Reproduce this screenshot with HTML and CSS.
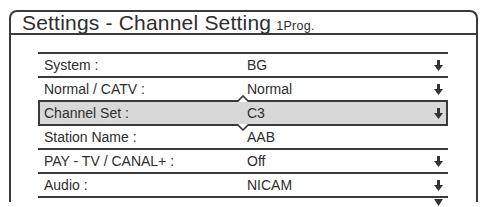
FILE: index.html
```html
<!DOCTYPE html>
<html>
<head>
<meta charset="utf-8">
<link rel="stylesheet" href="styles.css">
</head>
<body>
<div class="panel">
  <div class="titlebar">
    <span class="title">Settings - Channel Setting</span>
    <span class="sub">1Prog.</span>
  </div>
  <div class="content">
    <div class="list">
      <div class="row">
        <span class="label">System :</span><span class="value">BG</span>
        <svg class="arrow" viewBox="0 0 9 11" width="9" height="11"><rect x="3" y="0" width="3" height="6"/><polygon points="0,5 9,5 4.5,11"/></svg>
      </div>
      <div class="row">
        <span class="label">Normal / CATV :</span><span class="value">Normal</span>
        <svg class="arrow" viewBox="0 0 9 11" width="9" height="11"><rect x="3" y="0" width="3" height="6"/><polygon points="0,5 9,5 4.5,11"/></svg>
      </div>
      <div class="row selected">
        <svg class="chev chev-up" viewBox="0 0 12 7" width="12" height="7"><polygon points="0,7 6,1 12,7" class="fill"/><polyline points="0,7 6,1 12,7" class="stroke"/></svg>
        <span class="label">Channel Set :</span><span class="value">C3</span>
        <svg class="arrow" viewBox="0 0 9 11" width="9" height="11"><rect x="3" y="0" width="3" height="6"/><polygon points="0,5 9,5 4.5,11"/></svg>
        <svg class="chev chev-down" viewBox="0 0 12 7" width="12" height="7"><polygon points="0,0 6,6 12,0" class="fill"/><polyline points="0,0 6,6 12,0" class="stroke"/></svg>
      </div>
      <div class="row">
        <span class="label">Station Name :</span><span class="value">AAB</span>
      </div>
      <div class="row">
        <span class="label">PAY - TV / CANAL+ :</span><span class="value">Off</span>
        <svg class="arrow" viewBox="0 0 9 11" width="9" height="11"><rect x="3" y="0" width="3" height="6"/><polygon points="0,5 9,5 4.5,11"/></svg>
      </div>
      <div class="row">
        <span class="label">Audio :</span><span class="value">NICAM</span>
        <svg class="arrow" viewBox="0 0 9 11" width="9" height="11"><rect x="3" y="0" width="3" height="6"/><polygon points="0,5 9,5 4.5,11"/></svg>
      </div>
      <div class="more">
        <svg viewBox="0 0 9 7" width="9" height="7"><polygon points="0,0 9,0 4.5,7"/></svg>
      </div>
    </div>
  </div>
</div>
</body>
</html>
```

FILE: styles.css
```css
html, body {
  margin: 0;
  padding: 0;
  background: #ffffff;
}
body {
  width: 481px;
  height: 207px;
  overflow: hidden;
  font-family: "Liberation Sans", Arial, sans-serif;
  color: #2e2e2e;
}
.panel {
  margin: 10px 0 0 9px;
  width: 469px;
  height: 192px;
  box-sizing: border-box;
  border: 2px solid #3a3a3a;
  border-bottom: none;
  border-radius: 8px 8px 0 0;
}
.titlebar {
  height: 21px;
  border-bottom: 2px solid #3a3a3a;
  padding-left: 11px;
  display: flex;
  align-items: baseline;
  white-space: nowrap;
}
.title {
  font-size: 21px;
  line-height: 21px;
  letter-spacing: 0.2px;
}
.sub {
  font-size: 12.5px;
  margin-left: 5px;
  letter-spacing: 0.3px;
}
.content {
  padding: 17px 28px 0 27px;
}
.list {
  border-top: 2px solid #3a3a3a;
}
.row {
  position: relative;
  height: 22px;
  border-bottom: 2px solid #3a3a3a;
  display: flex;
  align-items: center;
  font-size: 14px;
  padding: 0 5px 0 6px;
}
.label {
  width: 203px;
}
.value {
  flex: 1;
}
.arrow {
  fill: #333333;
  display: block;
}
.selected {
  background: #d8d8d8;
  box-shadow: inset 2px 0 #3a3a3a, inset -2px 0 #3a3a3a;
}
.chev {
  position: absolute;
  left: 199px;
  display: block;
}
.chev-up {
  top: -7px;
}
.chev-down {
  bottom: -7px;
}
.chev .fill {
  fill: #ffffff;
}
.chev .stroke {
  fill: none;
  stroke: #3a3a3a;
  stroke-width: 1.6;
}
.more {
  display: flex;
  justify-content: flex-end;
  padding: 1px 5px 0 0;
}
.more svg {
  display: block;
  fill: #333333;
}
```
